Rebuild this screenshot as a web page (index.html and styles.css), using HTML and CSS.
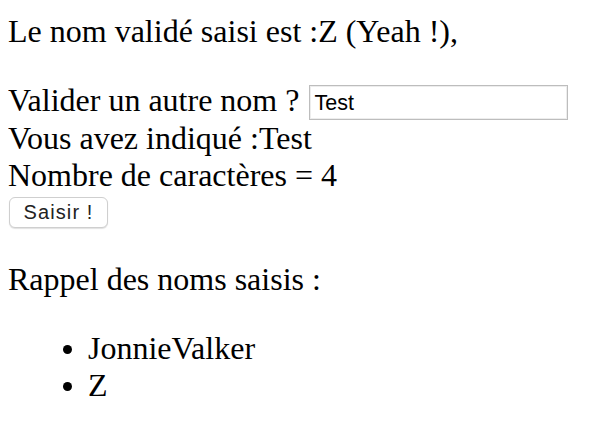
FILE: index.html
```html
<!DOCTYPE html>
<html lang="fr">
<head>
  <meta charset="UTF-8" />
  <title>Saisie des noms</title>
  <link rel="stylesheet" href="styles.css">
</head>
<body>

  <!-- Dernier nom -->
  <p class="last-name">Le nom validé saisi est :Z (Yeah !),</p>

  <!-- Formulaire -->
  <form class="name-form">
    Valider un autre nom ? <input type="text" class="name-input" value="Test"><br>
    Vous avez indiqué :Test<br>
    Nombre de caractères = 4<br>
    <button type="button" class="submit-btn">Saisir !</button>
  </form>

  <!-- Historique -->
  <p class="history-title">Rappel des noms saisis :</p>
  <ul class="history">
    <li>JonnieValker</li>
    <li>Z</li>
  </ul>

</body>
</html>
```

FILE: styles.css
```css
body {
  margin: 0 8px;
  font-family: "Liberation Serif", "Times New Roman", serif;
  font-size: 32px;
  color: #000;
  background: #fff;
}

.last-name {
  margin: 13px 0 32px;
}

.name-form {
  margin: 0;
}

.name-input {
  box-sizing: border-box;
  width: 259px;
  height: 35px;
  margin: 0 0 0 2px;
  padding: 2px 4px 0;
  border: 1px solid #bdbdbd;
  box-shadow: inset 0 0 0 1px #ededed;
  font-family: "Liberation Sans", Arial, sans-serif;
  font-size: 21.5px;
  line-height: normal;
  color: #000;
  vertical-align: 1px;
}

.submit-btn {
  box-sizing: border-box;
  width: 99px;
  height: 31px;
  margin: 3px 0 0 1px;
  padding: 0;
  border: 1px solid #cfcfcf;
  border-radius: 6px;
  background: #fff;
  box-shadow: 0 1px 1px rgba(0,0,0,0.12);
  font-family: "Liberation Sans", Arial, sans-serif;
  font-size: 20px;
  line-height: normal;
  letter-spacing: 1.1px;
  color: #222;
  vertical-align: top;
}

.history-title {
  margin: 30px 0 32px;
}

.history {
  margin: 32px 0;
  padding-left: 80px;
}

.history li::marker {
  font-size: 30px;
}
```
